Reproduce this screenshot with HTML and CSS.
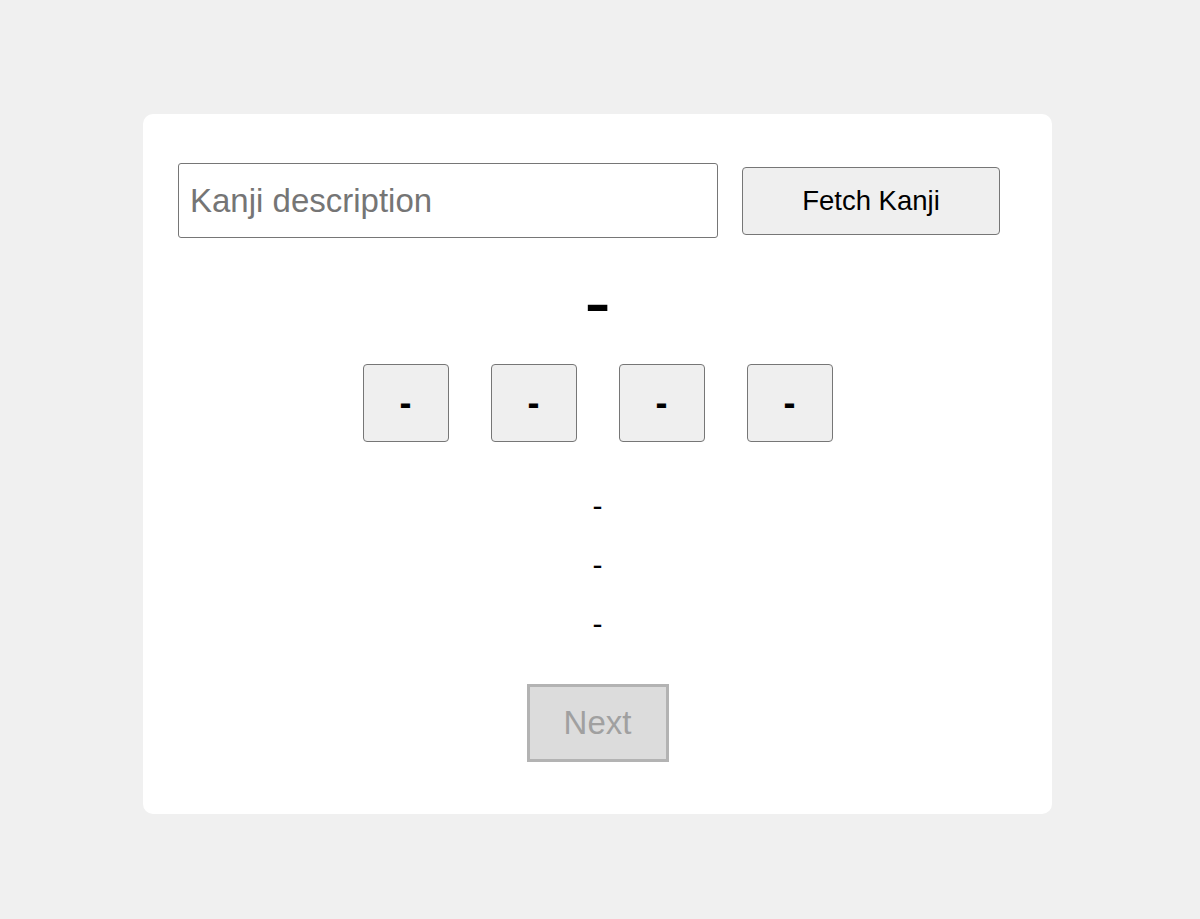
FILE: index.html
```html
<!DOCTYPE html>
<html>
<head>
  <link rel="stylesheet" href="styles.css">
</head>
<body>
  <div class="card">
    <div class="search-row">
      <input class="kanji-input" type="text" placeholder="Kanji description">
      <button class="fetch-button">Fetch Kanji</button>
    </div>

    <div class="kanji">-</div>

    <div class="options">
      <button class="option">-</button>
      <button class="option">-</button>
      <button class="option">-</button>
      <button class="option">-</button>
    </div>

    <div class="details">
      <p class="detail">-</p>
      <p class="detail">-</p>
      <p class="detail">-</p>
    </div>

    <button class="next-button" disabled>Next</button>
  </div>
</body>
</html>
```

FILE: styles.css
```css
body {
  margin: 0;
  padding: 0;
  background-color: #f0f0f0;
  font-family: "Liberation Sans", Arial, sans-serif;
}

.card {
  width: 909px;
  height: 700px;
  box-sizing: border-box;
  margin: 114px 0 0 143px;
  padding: 49px 35px 0 35px;
  background-color: #fff;
  border-radius: 10px;
  display: flex;
  flex-direction: column;
  align-items: center;
}

.search-row {
  display: flex;
  align-items: center;
  gap: 24px;
  align-self: stretch;
}

.kanji-input {
  width: 540px;
  height: 75px;
  box-sizing: border-box;
  padding: 0 11px;
  border: 1px solid #767676;
  border-radius: 3px;
  font-family: inherit;
  font-size: 33px;
}

.kanji-input::placeholder {
  color: #757575;
}

.fetch-button {
  width: 258px;
  height: 68px;
  background-color: #efefef;
  border: 1px solid #767676;
  border-radius: 4px;
  font-family: inherit;
  font-size: 27.5px;
  color: #000;
}

.kanji {
  margin-top: 35px;
  font-size: 80px;
  line-height: 58px;
}

.options {
  display: flex;
  gap: 42px;
  margin-top: 33px;
}

.option {
  width: 86px;
  height: 78px;
  background-color: #efefef;
  border: 1px solid #767676;
  border-radius: 4px;
  font-family: inherit;
  font-size: 36px;
  font-weight: bold;
  color: #000;
}

.details {
  margin-top: 48px;
  display: flex;
  flex-direction: column;
  gap: 27px;
}

.detail {
  margin: 0;
  font-size: 30px;
  line-height: 32px;
  text-align: center;
}

.next-button {
  margin-top: 44px;
  width: 142px;
  height: 78px;
  background-color: #dcdcdc;
  border: 3px solid #b3b3b3;
  font-family: inherit;
  font-size: 33px;
  color: #a0a0a0;
}
```
